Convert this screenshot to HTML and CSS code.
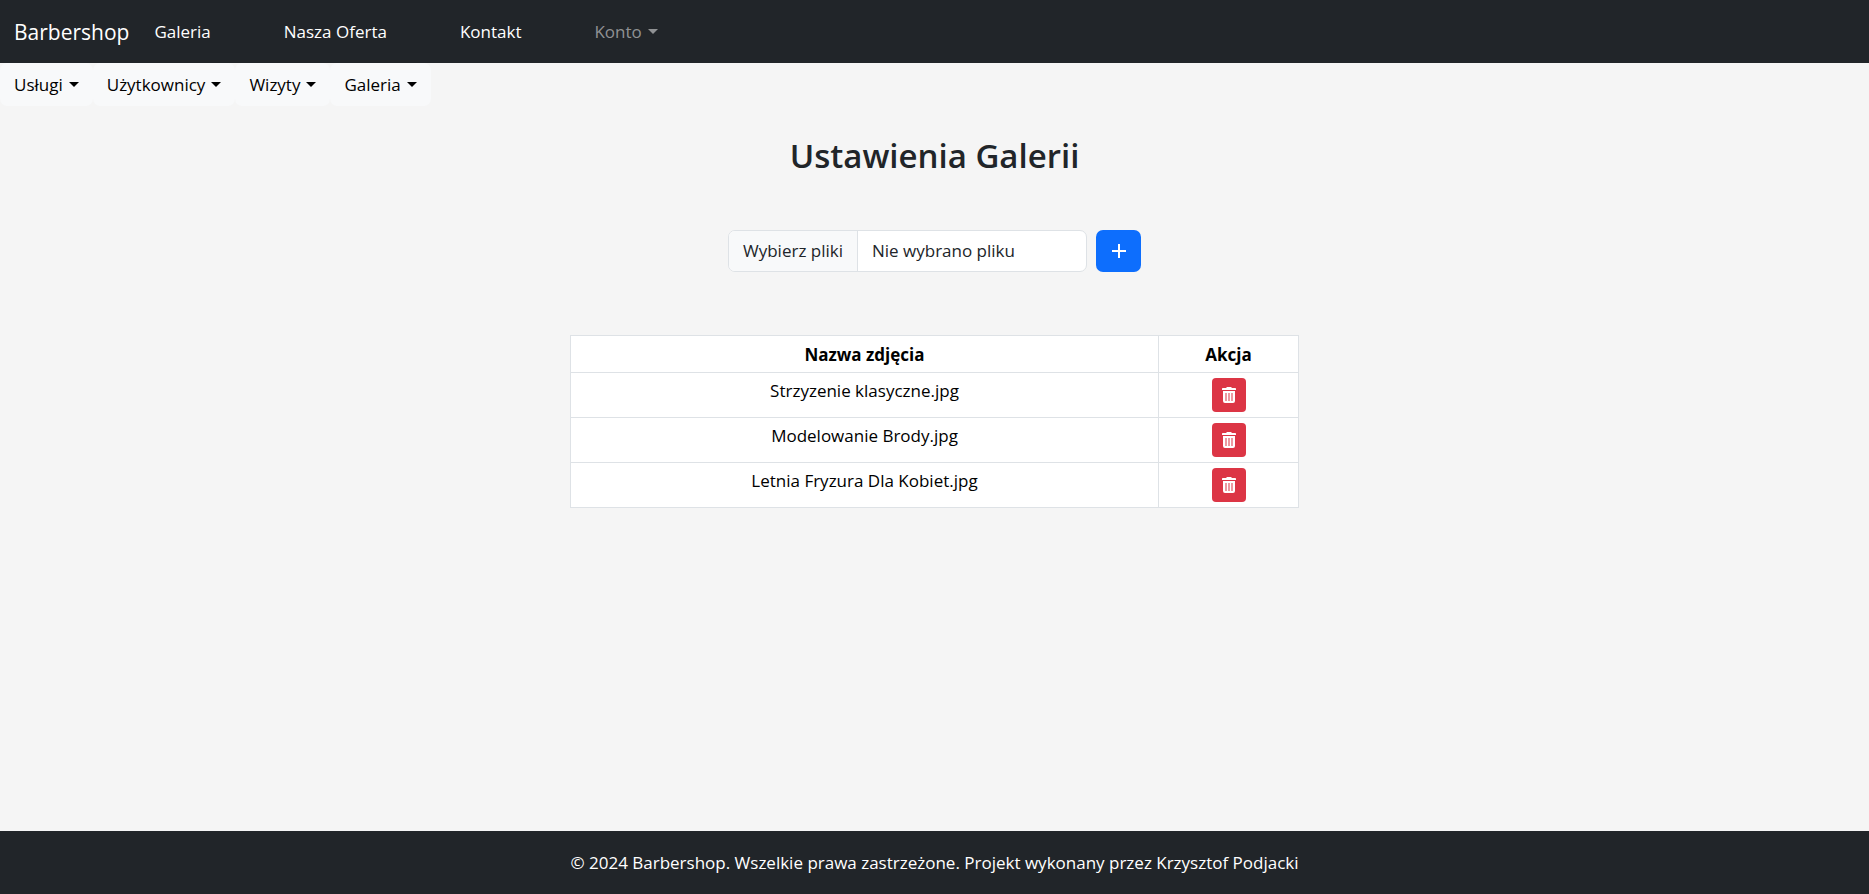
FILE: index.html
```html
<!DOCTYPE html>
<html lang="pl">
<head>
  <meta charset="utf-8">
  <meta name="viewport" content="width=device-width, initial-scale=1">
  <title>Ustawienia Galerii</title>
  <link rel="stylesheet" href="styles.css">
</head>
<body>
  <svg class="sprite" aria-hidden="true">
    <symbol id="trash" viewBox="0 0 16 16">
      <path d="M5.5 0h5v1H14.2a.8.8 0 0 1 .8.8V3H1V1.800a.8.8 0 0 1 .8-.8H5.500z"/>
      <path fill-rule="evenodd" d="M2 4h12v10a2 2 0 0 1-2 2H4a2 2 0 0 1-2-2zM4.500 6v8h1V6zM7.500 6v8h1V6zM10.500 6v8h1V6z"/>
    </symbol>
  </svg>
  <nav class="navbar">
    <a class="brand" href="#">Barbershop</a>
    <div class="nav-links">
      <a class="nav-link" href="#">Galeria</a>
      <a class="nav-link" href="#">Nasza Oferta</a>
      <a class="nav-link" href="#">Kontakt</a>
      <a class="nav-link muted caret" href="#">Konto</a>
    </div>
  </nav>
  <div class="admin-bar">
    <button class="menu-button caret" type="button">Usługi</button>
    <button class="menu-button caret" type="button">Użytkownicy</button>
    <button class="menu-button caret" type="button">Wizyty</button>
    <button class="menu-button caret" type="button">Galeria</button>
  </div>
  <main class="content">
    <h2 class="title">Ustawienia Galerii</h2>
    <form class="upload">
      <label class="file-field">
        <span class="file-button">Wybierz pliki</span>
        <span class="file-name">Nie wybrano pliku</span>
        <input class="file-input" type="file" multiple>
      </label>
      <button class="add-button" type="submit" aria-label="Dodaj">
        <svg class="plus-icon" viewBox="0 0 14 14" aria-hidden="true"><path d="M7 0v14M0 7h14"/></svg>
      </button>
    </form>
    <table class="photos">
      <thead>
        <tr><th>Nazwa zdjęcia</th><th class="action-column">Akcja</th></tr>
      </thead>
      <tbody>
        <tr>
          <td>Strzyzenie klasyczne.jpg</td>
          <td><button class="delete-button" type="button" aria-label="Usuń"><svg class="trash-icon"><use href="#trash"/></svg></button></td>
        </tr>
        <tr>
          <td>Modelowanie Brody.jpg</td>
          <td><button class="delete-button" type="button" aria-label="Usuń"><svg class="trash-icon"><use href="#trash"/></svg></button></td>
        </tr>
        <tr>
          <td>Letnia Fryzura Dla Kobiet.jpg</td>
          <td><button class="delete-button" type="button" aria-label="Usuń"><svg class="trash-icon"><use href="#trash"/></svg></button></td>
        </tr>
      </tbody>
    </table>
  </main>
  <footer class="footer">© 2024 Barbershop. Wszelkie prawa zastrzeżone. Projekt wykonany przez Krzysztof Podjacki</footer>
</body>
</html>
```
FILE: styles.css
```css
* {
  box-sizing: border-box;
}

body {
  display: flex;
  flex-direction: column;
  min-height: 100vh;
  margin: 0;
  background: #f5f5f5;
  color: #212529;
  font-family: "Segoe UI", "Open Sans", "Noto Sans", sans-serif;
  font-size: 17px;
  line-height: 26px;
}

button {
  font: inherit;
  border: 0;
  cursor: pointer;
}

.sprite {
  position: absolute;
  width: 0;
  height: 0;
}

.navbar {
  display: flex;
  align-items: center;
  gap: 25px;
  min-height: 63px;
  padding: 0 14px;
  background: #212529;
}

.brand {
  color: #fff;
  font-size: 21px;
  text-decoration: none;
}

.nav-links {
  display: flex;
  gap: 73px;
}

.nav-link {
  color: #fff;
  text-decoration: none;
}

.muted {
  color: #909294;
}

.caret::after {
  content: "";
  display: inline-block;
  margin-left: 6px;
  vertical-align: 4px;
  border-top: 5px solid;
  border-left: 5px solid transparent;
  border-right: 5px solid transparent;
}

.admin-bar {
  display: flex;
}

.menu-button {
  padding: 9px 14px 8px;
  border-radius: 7px;
  background: #f8f9fa;
  color: #000;
}

.content {
  display: flex;
  flex: 1;
  flex-direction: column;
  align-items: center;
  padding: 29px 16px;
}

.title {
  margin: 0 0 53px;
  font-size: 33px;
  font-weight: 600;
  line-height: 42px;
}

.upload {
  display: flex;
  gap: 9px;
  margin-bottom: 63px;
}

.file-field {
  position: relative;
  display: flex;
  width: 359px;
  overflow: hidden;
  border: 1px solid #dee2e6;
  border-radius: 7px;
  background: #fff;
}

.file-button {
  padding: 7px 14px;
  border-right: 1px solid #dee2e6;
  background: #f8f9fa;
}

.file-name {
  padding: 7px 14px;
}

.file-input {
  position: absolute;
  inset: 0;
  width: 100%;
  opacity: 0;
}

.add-button {
  display: flex;
  align-items: center;
  justify-content: center;
  width: 45px;
  border-radius: 7px;
  background: #0d6efd;
}

.plus-icon {
  width: 14px;
  height: 14px;
  fill: none;
  stroke: #fff;
  stroke-width: 2;
}

.photos {
  width: 100%;
  max-width: 729px;
  border-collapse: collapse;
  background: #fff;
  color: #000;
  text-align: center;
}

.photos th,
.photos td {
  padding: 5px;
  border: 1px solid #dee2e6;
  vertical-align: top;
}

.photos th {
  padding: 6px 5px 4px;
}

.action-column {
  width: 140px;
}

.delete-button {
  display: flex;
  align-items: center;
  justify-content: center;
  width: 34px;
  height: 34px;
  margin: 0 auto;
  padding: 0;
  border-radius: 4px;
  background: #dc3545;
}

.trash-icon {
  width: 16px;
  height: 16px;
  fill: #fff;
}

.footer {
  padding: 19px 16px 18px;
  background: #212529;
  color: #fff;
  text-align: center;
}
```
